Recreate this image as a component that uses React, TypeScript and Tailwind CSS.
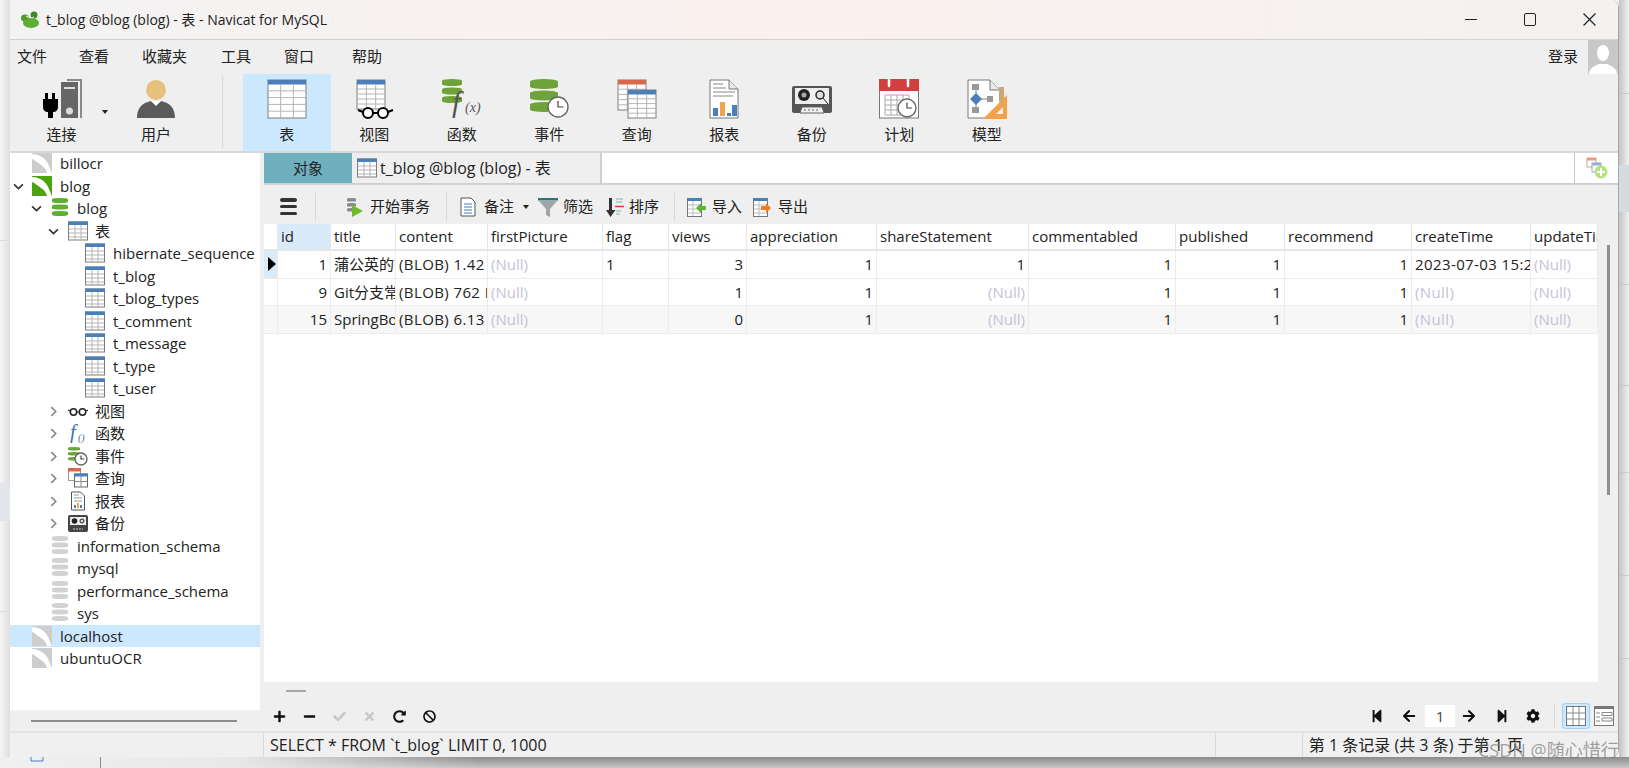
import { ReactNode } from 'react';
import {
  FaBan,
  FaArrowLeft,
  FaArrowRight,
  FaCheck,
  FaCog,
  FaMinus,
  FaPlus,
  FaRedoAlt,
  FaStepBackward,
  FaStepForward,
  FaTimes,
} from 'react-icons/fa';

const FONT = 'font-["Open_Sans","Noto_Sans_CJK_SC",sans-serif]';

const Clock = ({ cx, cy, r }: { cx: number; cy: number; r: number }) => (
  <g>
    <circle cx={cx} cy={cy} r={r} fill="#fff" stroke="#666" strokeWidth="1.4" />
    <path d={`M${cx} ${cy - r * 0.6}V${cy}H${cx + r * 0.55}`} fill="none" stroke="#444" strokeWidth="1.2" />
  </g>
);

const Sheet = ({ x, y, w, h, head = '#4a7fb8' }: { x: number; y: number; w: number; h: number; head?: string }) => {
  const rows = [1, 2, 3, 4].map((i) => y + 4 + ((h - 4) * i) / 5);
  const cols = [1, 2].map((i) => x + (w * i) / 3);
  return (
    <g>
      <rect x={x} y={y} width={w} height={h} fill="#fff" stroke="#7d7d7d" />
      <rect x={x} y={y} width={w} height={4.5} fill={head} />
      {rows.map((r) => (
        <path key={r} d={`M${x} ${r}H${x + w}`} stroke="#b5b5b5" />
      ))}
      {cols.map((c) => (
        <path key={c} d={`M${c} ${y + 4}V${y + h}`} stroke="#b5b5b5" />
      ))}
    </g>
  );
};

// stacked disks of a database drum
const Cylinder = ({ x, y, w, n, h, fill }: { x: number; y: number; w: number; n: number; h: number; fill: string }) => {
  const c = h / 4;
  return (
    <g>
      {Array.from({ length: n }).map((_, i) => {
        const t = y + i * (h + 1.5);
        return (
          <path
            key={i}
            d={`M${x} ${t + c}A${w / 2} ${c} 0 0 1 ${x + w} ${t + c}V${t + h - c}A${w / 2} ${c} 0 0 1 ${x} ${t + h - c}Z`}
            fill={fill}
          />
        );
      })}
    </g>
  );
};

const Big = ({ children }: { children: ReactNode }) => (
  <svg viewBox="0 0 40 40" className="h-10 w-10">
    {children}
  </svg>
);

const ConnectIcon = () => (
  <Big>
    <path d="M25 0h15v39h-2V2H25z" fill="#8a8a8a" />
    <rect x="19" y="3" width="17" height="36" fill="#666" />
    <rect x="22" y="8" width="11" height="2" fill="#ddd" />
    <circle cx="27.5" cy="32" r="3.5" fill="#ddd" />
    <path d="M3 14h3v6h4v-6h3v6h3v8c0 3-2 5-5 5v6H6v-6c-3 0-5-2-5-5v-8h2z" fill="#000" />
  </Big>
);

const UserIcon = () => (
  <Big>
    <circle cx="20" cy="11" r="10" fill="#e6c17d" />
    <path d="M1 39c0-10 5-15 14-17l5 4 5-4c9 2 14 7 14 17z" fill="#5a5a5a" />
    <path d="M15 22h10l-5 5z" fill="#fff" />
  </Big>
);

const TableIcon = () => (
  <Big>
    <Sheet x={1} y={1} w={38} h={38} />
  </Big>
);

const ViewIcon = () => (
  <Big>
    <Sheet x={3} y={1} w={28} h={29} />
    <circle cx="14" cy="34" r="5" fill="#fff" stroke="#000" strokeWidth="2" />
    <circle cx="29" cy="34" r="5" fill="#fff" stroke="#000" strokeWidth="2" />
    <path d="M4 31l5 2M19 34h5M34 33l5-2" stroke="#000" strokeWidth="2" />
  </Big>
);

const FunctionIcon = () => (
  <Big>
    <Cylinder x={0} y={0} w={20} n={3} h={7} fill="#6ea23a" />
    <text x="10" y="33" fontFamily="Liberation Serif" fontStyle="italic" fontSize="30" fill="#555">f</text>
    <text x="23" y="33" fontFamily="Liberation Serif" fontStyle="italic" fontSize="14" fill="#555">(x)</text>
  </Big>
);

const EventIcon = () => (
  <Big>
    <Cylinder x={1} y={0} w={28} n={3} h={10} fill="#6ea23a" />
    <Clock cx={29} cy={28} r={10} />
  </Big>
);

const QueryIcon = () => (
  <Big>
    <Sheet x={1} y={1} w={28} h={30} head="#d9674a" />
    <Sheet x={11} y={11} w={28} h={28} />
  </Big>
);

const ReportIcon = () => (
  <Big>
    <path d="M6 1h19l9 9v29H6z" fill="#fff" stroke="#777" />
    <path d="M25 1v9h9" fill="#e8e8e8" stroke="#777" />
    <path d="M9 5h10M9 9h13M9 13h22M9 17h20" stroke="#888" />
    <rect x="9" y="29" width="5" height="8" fill="#4a7fb8" />
    <rect x="16" y="23" width="5" height="14" fill="#f2a24a" />
    <rect x="23" y="34" width="4" height="3" fill="#4a7fb8" />
    <rect x="28" y="26" width="5" height="11" fill="#4a7fb8" />
  </Big>
);

const BackupIcon = () => (
  <Big>
    <rect x="0" y="7" width="40" height="27" rx="2" fill="#555" />
    <rect x="3" y="9" width="34" height="16" fill="#eee" />
    <circle cx="12" cy="16" r="6" fill="#222" />
    <circle cx="12" cy="16" r="2.5" fill="#aaa" />
    <circle cx="28" cy="16" r="4" fill="#ddd" stroke="#222" strokeWidth="1.5" />
    <path d="M31 19l5 6" stroke="#222" />
    <path d="M8 34l2-6h20l2 6z" fill="#eee" stroke="#666" />
    <path d="M12 31h16" stroke="#666" strokeDasharray="2 2" />
  </Big>
);

const ScheduleIcon = () => (
  <Big>
    <rect x="0.5" y="1" width="39" height="38" fill="#fff" stroke="#777" />
    <rect x="0" y="0" width="40" height="12" fill="#d23f3f" />
    <path d="M10 0v7M29 0v7" stroke="#fff" strokeWidth="2.5" strokeLinecap="round" />
    <path d="M6 16h24M6 21h20M6 26h18M6 31h16M6 36h16M6 16v20M12 16v20M18 16v20M24 16v14M30 16v6" stroke="#aaa" fill="none" />
    <Clock cx={28} cy={29} r={9} />
  </Big>
);

const ModelIcon = () => (
  <Big>
    <path d="M1 1h22l10 10v28H1z" fill="#fff" stroke="#777" />
    <path d="M23 1v10h10" fill="#e8e8e8" stroke="#777" />
    <path d="M9 9v22M9 20h14" stroke="#888" />
    <rect x="5" y="5" width="7" height="6" fill="#999" />
    <rect x="5" y="28" width="7" height="6" fill="#999" />
    <rect x="20" y="17" width="6" height="6" fill="#999" />
    <path d="M9 14l6 6-6 6-6-6z" fill="#4a7fb8" />
    <rect x="32" y="8" width="5" height="14" fill="#c8a878" />
    <path d="M40 16v24H16z" fill="#f2a24a" />
    <path d="M36 28v7h-7z" fill="#efefef" />
  </Big>
);

const LogoIcon = () => (
  <svg viewBox="0 0 20 18" className="h-[18px] w-5">
    <ellipse cx="5" cy="7" rx="4" ry="3.5" fill="#4f9a2c" />
    <ellipse cx="14" cy="4" rx="3.5" ry="3.5" fill="#3f8a22" />
    <ellipse cx="11" cy="12" rx="8" ry="5" fill="#5fae34" />
    <path d="M6 5c3 2 6 2 8 1" stroke="#fff" fill="none" />
  </svg>
);

const MysqlIcon = ({ on }: { on?: boolean }) => (
  <svg viewBox="0 0 20 20" className="h-5 w-5">
    <rect width="20" height="20" fill={on ? '#4aa50c' : '#cdcdcd'} />
    <path d="M0 1c6 0 12 3 15 8 2 3 3 7 5 11h-5c-1-4-3-6-6-8C6 10 3 7 0 6z" fill="#fff" />
  </svg>
);

const DbIcon = ({ on }: { on?: boolean }) => (
  <svg viewBox="0 0 16 18" className="h-[18px] w-4">
    <Cylinder x={0} y={0} w={16} n={3} h={5} fill={on ? '#5fae34' : '#d2d2d2'} />
  </svg>
);

const SmallTable = () => (
  <svg viewBox="0 0 20 20" className="h-5 w-5">
    <rect x="0.5" y="1" width="19" height="18" fill="#fff" stroke="#7d7d7d" />
    <rect x="0" y="0.5" width="20" height="3.5" fill="#4a7fb8" />
    <path d="M1 8h18M1 12h18M1 16h18M7 4v15M13 4v15" stroke="#b5b5b5" />
  </svg>
);

const GlassesSmall = () => (
  <svg viewBox="0 0 20 20" className="h-5 w-5">
    <circle cx="5.5" cy="11" r="3.2" fill="none" stroke="#222" strokeWidth="1.5" />
    <circle cx="14.5" cy="11" r="3.2" fill="none" stroke="#222" strokeWidth="1.5" />
    <path d="M0 9l2 1M8.7 11h2.6M18 10l2-1" stroke="#222" strokeWidth="1.2" />
  </svg>
);

const FuncSmall = () => (
  <svg viewBox="0 0 20 20" className="h-5 w-5">
    <text x="2" y="16" fontFamily="Liberation Serif" fontStyle="italic" fontSize="20" fill="#3d6fa8">f</text>
    <text x="10" y="18" fontFamily="Liberation Serif" fontStyle="italic" fontSize="10" fill="#3d6fa8">()</text>
  </svg>
);

const EventSmall = () => (
  <svg viewBox="0 0 20 20" className="h-5 w-5">
    <Cylinder x={0} y={1} w={12} n={3} h={3.5} fill="#6ea23a" />
    <Clock cx={13} cy={13} r={6} />
  </svg>
);

const QuerySmall = () => (
  <svg viewBox="0 0 20 20" className="h-5 w-5">
    <rect x="0.5" y="0.5" width="12" height="12" fill="#fff" stroke="#999" />
    <rect x="0" y="0" width="13" height="3.5" fill="#d9674a" />
    <rect x="6.5" y="6" width="13" height="13" fill="#fff" stroke="#666" />
    <rect x="6" y="5.5" width="14" height="3" fill="#4a7fb8" />
    <path d="M13 8v11M7 13.5h12" stroke="#888" />
  </svg>
);

const ReportSmall = () => (
  <svg viewBox="0 0 20 20" className="h-5 w-5">
    <path d="M3.5 1h9l4 4v14h-13z" fill="#fff" stroke="#555" />
    <path d="M6 4h5M6 7h8M6 10h8" stroke="#999" />
    <rect x="6" y="14" width="2" height="3" fill="#4a7fb8" />
    <rect x="9" y="12" width="2" height="5" fill="#f2a24a" />
    <rect x="12" y="14" width="2" height="3" fill="#4a7fb8" />
  </svg>
);

const BackupSmall = () => (
  <svg viewBox="0 0 20 20" className="h-5 w-5">
    <rect x="0" y="2" width="20" height="17" rx="2" fill="#444" />
    <rect x="2" y="4" width="16" height="8" fill="#eee" />
    <circle cx="6.5" cy="8" r="2.8" fill="#222" />
    <circle cx="14" cy="8" r="2" fill="#ddd" stroke="#222" />
    <path d="M5 16h10" stroke="#ccc" strokeDasharray="2 1" />
  </svg>
);

const Chevron = ({ open }: { open?: boolean }) => (
  <svg viewBox="0 0 10 10" className="h-[11px] w-[11px]">
    <path
      d={open ? 'M1 3l4 4 4-4' : 'M3 1l4 4-4 4'}
      fill="none"
      stroke={open ? '#333' : '#888'}
      strokeWidth="1.5"
    />
  </svg>
);

type TreeItem = {
  label: string;
  text: number;
  icon: ReactNode;
  iconAt: number;
  chevron?: number;
  open?: boolean;
  selected?: boolean;
};

const tableRow = (label: string): TreeItem => ({ label, text: 103, icon: <SmallTable />, iconAt: 75 });
const folder = (label: string, icon: ReactNode): TreeItem => ({ label, text: 85, icon, iconAt: 58, chevron: 38 });
const greyDb = (label: string): TreeItem => ({ label, text: 67, icon: <DbIcon />, iconAt: 42 });

const tree: TreeItem[] = [
  { label: 'billocr', text: 50, icon: <MysqlIcon />, iconAt: 22 },
  { label: 'blog', text: 50, icon: <MysqlIcon on />, iconAt: 22, chevron: 3, open: true },
  { label: 'blog', text: 67, icon: <DbIcon on />, iconAt: 42, chevron: 21, open: true },
  { label: '表', text: 85, icon: <SmallTable />, iconAt: 58, chevron: 38, open: true },
  tableRow('hibernate_sequence'),
  tableRow('t_blog'),
  tableRow('t_blog_types'),
  tableRow('t_comment'),
  tableRow('t_message'),
  tableRow('t_type'),
  tableRow('t_user'),
  folder('视图', <GlassesSmall />),
  folder('函数', <FuncSmall />),
  folder('事件', <EventSmall />),
  folder('查询', <QuerySmall />),
  folder('报表', <ReportSmall />),
  folder('备份', <BackupSmall />),
  greyDb('information_schema'),
  greyDb('mysql'),
  greyDb('performance_schema'),
  greyDb('sys'),
  { label: 'localhost', text: 50, icon: <MysqlIcon />, iconAt: 22, selected: true },
  { label: 'ubuntuOCR', text: 50, icon: <MysqlIcon />, iconAt: 22 },
];

const Sidebar = () => (
  <div className="flex w-[250px] shrink-0 flex-col">
    <div className="h-[557px] overflow-hidden bg-white">
      <div className="-mt-px">
        {tree.map((item, i) => (
          <div
            key={i}
            className={`relative h-[22.5px] overflow-hidden whitespace-nowrap text-[15px] leading-[22px] text-[#222] ${
              item.selected ? 'bg-[#cce8ff]' : ''
            }`}
          >
            {item.chevron !== undefined && (
              <span className="absolute top-[6px]" style={{ left: item.chevron }}>
                <Chevron open={item.open} />
              </span>
            )}
            <span className="absolute top-[1px]" style={{ left: item.iconAt }}>
              {item.icon}
            </span>
            <span className="absolute top-0" style={{ left: item.text }}>
              {item.label}
            </span>
          </div>
        ))}
      </div>
    </div>
    <div className="flex h-[21px] items-center pl-[21px]">
      <div className="h-[2px] w-[206px] bg-[#8c8c8c]" />
    </div>
  </div>
);

const tools = [
  { label: '表', icon: <TableIcon />, active: true },
  { label: '视图', icon: <ViewIcon /> },
  { label: '函数', icon: <FunctionIcon /> },
  { label: '事件', icon: <EventIcon /> },
  { label: '查询', icon: <QueryIcon /> },
  { label: '报表', icon: <ReportIcon /> },
  { label: '备份', icon: <BackupIcon /> },
  { label: '计划', icon: <ScheduleIcon /> },
  { label: '模型', icon: <ModelIcon /> },
];

const ToolButton = ({ label, icon, active, className = 'w-[87.5px]' }: { label: string; icon: ReactNode; active?: boolean; className?: string }) => (
  <div className={`flex h-[77px] flex-col items-center pt-[5px] ${className} ${active ? 'bg-[#cce8ff]' : ''}`}>
    {icon}
    <span className="mt-[5px] text-[15px] leading-5 text-[#222]">{label}</span>
  </div>
);

const menus = [
  { label: '文件', className: 'ml-[7px] w-[62px]' },
  { label: '查看', className: 'w-[63px]' },
  { label: '收藏夹', className: 'w-[79px]' },
  { label: '工具', className: 'w-[63px]' },
  { label: '窗口', className: 'w-[68px]' },
  { label: '帮助', className: '' },
];

const columns = [
  'id',
  'title',
  'content',
  'firstPicture',
  'flag',
  'views',
  'appreciation',
  'shareStatement',
  'commentabled',
  'published',
  'recommend',
  'createTime',
  'updateTime',
];

const NULL = '(Null)';

const rows = [
  ['1', '蒲公英的故事', '(BLOB) 1.42 KB', NULL, '1', '3', '1', '1', '1', '1', '1', '2023-07-03 15:26:41', NULL],
  ['9', 'Git分支常用', '(BLOB) 762 Bytes', NULL, '', '1', '1', NULL, '1', '1', '1', NULL, NULL],
  ['15', 'SpringBoot', '(BLOB) 6.13 KB', NULL, '', '0', '1', NULL, '1', '1', '1', NULL, NULL],
];

const rightAligned = [0, 5, 6, 7, 8, 9, 10];

const GRID = 'grid grid-cols-[14px_53px_65px_92px_115px_66px_78px_130px_152px_147px_109px_127px_119px_67px]';

const Grid = () => (
  <div className="h-[458px] w-[1334px] bg-white text-[15px] text-[#222]">
    <div className={`${GRID} h-[27px] border-b-2 border-[#e6e6e6] leading-[25px]`}>
      <div className="border-r border-[#e6e6e6]" />
      {columns.map((c, i) => (
        <div
          key={c}
          className={`overflow-hidden whitespace-nowrap border-r border-[#e6e6e6] pl-[3px] ${i === 0 ? 'bg-[#d9ebf9]' : ''}`}
        >
          {c}
        </div>
      ))}
    </div>
    {rows.map((row, r) => (
      <div
        key={r}
        className={`${GRID} h-[27.5px] border-b border-[#ececec] leading-[27px] ${r === 2 ? 'bg-[#f7f7f7]' : ''}`}
      >
        <div className={`flex items-center border-r border-[#ececec] pl-1 ${r === 0 ? 'bg-[#d9ebf9]' : ''}`}>
          {r === 0 && <div className="h-0 w-0 border-y-[7px] border-l-[8px] border-y-transparent border-l-black" />}
        </div>
        {row.map((v, i) => (
          <div
            key={i}
            className={`overflow-hidden whitespace-nowrap border-r border-[#ececec] px-[3px] ${
              v === NULL ? 'text-[#c3c3d6]' : ''
            } ${rightAligned.includes(i) ? 'text-right' : ''} ${i === 2 || i === 11 ? 'tracking-[0.4px]' : ''}`}
          >
            {v}
          </div>
        ))}
      </div>
    ))}
  </div>
);

const Small = ({ w = 19, children }: { w?: number; children: ReactNode }) => (
  <svg viewBox={`0 0 ${w} 20`} width={w} height={20} className="block shrink-0">
    {children}
  </svg>
);

const ImportExport = ({ color, d }: { color: string; d: string }) => (
  <Small>
    <rect x="0.5" y="1.5" width="14" height="18" fill="#fff" stroke="#777" />
    <rect x="0" y="1" width="15" height="3" fill="#4a7fb8" />
    <path d="M1 8h13M1 12h13M1 16h13M6 4v15" stroke="#bbb" />
    <path d={d} fill={color} />
  </Small>
);

const Sep = ({ className }: { className: string }) => <div className={`h-7 w-px bg-[#d8d8d8] ${className}`} />;

const SubToolbar = () => (
  <div className="flex h-[39px] shrink-0 items-center pt-[4px] text-[15px] text-[#222]">
    <div className="ml-[16px] flex h-[17px] w-[17px] flex-col justify-between">
      <div className="h-[3.5px] rounded-sm bg-[#333]" />
      <div className="h-[3.5px] rounded-sm bg-[#333]" />
      <div className="h-[3.5px] rounded-sm bg-[#333]" />
    </div>
    <Sep className="ml-[18px]" />
    <span className="ml-[30px]">
      <Small w={18}>
        <Cylinder x={1} y={1} w={9} n={3} h={3.5} fill="#8a8a8a" />
        <path d="M6 8l11 6-11 6z" fill="#6dbb2c" />
      </Small>
    </span>
    <span className="ml-[6px]">开始事务</span>
    <Sep className="ml-[16px]" />
    <span className="ml-[13px]">
      <Small w={16}>
        <path d="M1 1h10l4 4v14H1z" fill="#fff" stroke="#555" />
        <path d="M4 7h8M4 10h8M4 13h8M4 16h8" stroke="#3d7fc0" />
      </Small>
    </span>
    <span className="ml-[8px]">备注</span>
    <div className="ml-[9px] h-0 w-0 border-x-[3.5px] border-t-[4px] border-x-transparent border-t-[#222]" />
    <span className="ml-[9px]">
      <Small w={20}>
        <path d="M0 1h20v2.5H0z" fill="#2f6f7f" />
        <path d="M1 4h18l-7 8v8l-4-2v-6z" fill="#9fa5a8" />
      </Small>
    </span>
    <span className="ml-[5px]">筛选</span>
    <span className="ml-[12px]">
      <Small>
        <path d="M4 1h3v12h3.5L5.5 20 1 13h3z" fill="#333" />
        <path d="M11 2h7M11 5h6M11 14h5M11 17h4" stroke="#7fb8a0" />
        <path d="M10 9.5h9" stroke="#e2334a" strokeWidth="1.5" />
      </Small>
    </span>
    <span className="ml-[5px]">排序</span>
    <Sep className="ml-[15px]" />
    <span className="ml-[12px]">
      <ImportExport color="#5cb82e" d="M9 11l5-5v3h5v4h-5v3z" />
    </span>
    <span className="ml-[6px]">导入</span>
    <span className="ml-[11px]">
      <ImportExport color="#f57c1f" d="M8 9h5V6l5 5-5 5v-3H8z" />
    </span>
    <span className="ml-[6px]">导出</span>
  </div>
);

const BottomBar = () => (
  <div className="h-[48px] shrink-0 pt-[8px]">
    <div className="ml-[22px] h-[2px] w-5 bg-[#a8a8a8]" />
    <div className="mt-[11px] flex h-[26px] items-center justify-between pr-[4px]">
      <div className="ml-[9px] flex items-center gap-[17px] text-[13px] text-[#111]">
        <FaPlus />
        <FaMinus />
        <FaCheck className="text-[#c8c8c8]" />
        <FaTimes className="text-[#c8c8c8]" />
        <FaRedoAlt />
        <FaBan />
      </div>
      <div className="flex items-center text-[14px] text-[#111]">
        <FaStepBackward />
        <FaArrowLeft className="ml-[18px]" />
        <span className="ml-[9px] flex h-[22px] w-[30px] items-center justify-center bg-white text-[15px] text-[#444]">1</span>
        <FaArrowRight className="ml-[7px]" />
        <FaStepForward className="ml-[19px]" />
        <FaCog className="ml-[17px]" />
        <div className="ml-[14px] h-6 w-px bg-[#d8d8d8]" />
        <div className="ml-[7px] flex h-[26px] w-[28px] items-center justify-center rounded-[3px] border border-[#9fd0f5] bg-[#cce8ff]">
          <svg viewBox="0 0 20 20" className="h-5 w-5">
            <rect x="0.5" y="0.5" width="19" height="19" fill="#fff" stroke="#777" />
            <path d="M7 1v18M13 1v18M1 7h18M1 13h18" stroke="#888" />
          </svg>
        </div>
        <svg viewBox="0 0 20 20" className="ml-1 h-5 w-5">
          <rect x="0.5" y="0.5" width="19" height="19" fill="#fff" stroke="#777" />
          <rect x="0" y="0" width="20" height="3" fill="#777" />
          <path d="M2 7h4M2 11h4M2 15h4M8 6.5h10v3H8zM8 12h10v3H8z" fill="none" stroke="#888" />
        </svg>
      </div>
    </div>
  </div>
);

export default function App() {
  return (
    <div className={`relative flex h-[768px] w-[1629px] flex-col overflow-hidden bg-[#f3f3f3] ${FONT}`}>
      <div className="flex h-[757px] shrink-0">
        <div className="flex w-[10px] shrink-0 flex-col bg-[#ececec] bg-linear-to-r from-[#f6f6f6] to-[#dedede]">
          <div className="mt-[240px] h-px bg-[#dcdcdc]" />
          <div className="mt-[242px] h-[38px] bg-[#e2e5ea]" />
          <div className="mt-[90px] h-px bg-[#dcdcdc]" />
        </div>
        <div className="flex h-[757px] w-[1609px] shrink-0 flex-col overflow-hidden rounded-lg border-r border-[#a8a8a8] bg-[#efefef]">
          <div className="flex h-10 shrink-0 items-center border-b border-[#d2d2d2] bg-[#f5f2f1] bg-linear-to-r from-[#f3f3f3] via-[#fbf1ee] to-[#f3f2f1]">
            <span className="ml-[10px]">
              <LogoIcon />
            </span>
            <span className="ml-[6px] text-[14px] text-[#222]">t_blog @blog (blog) - 表 - Navicat for MySQL</span>
            <div className="ml-auto flex items-center">
              <div className="h-[1.5px] w-[12px] bg-[#222]" />
              <div className="ml-[47px] h-[13px] w-[12px] rounded-[2px] border-[1.5px] border-[#222]" />
              <svg viewBox="0 0 12 12" className="ml-[47px] mr-[22px] h-[13px] w-[13px]">
                <path d="M0.5 0.5l11 11M11.5 0.5l-11 11" stroke="#222" strokeWidth="1.1" />
              </svg>
            </div>
          </div>
          <div className="flex h-[32px] shrink-0 items-center text-[15px] text-[#222]">
            {menus.map((m) => (
              <span key={m.label} className={m.className}>
                {m.label}
              </span>
            ))}
            <span className="ml-auto mr-[10px]">登录</span>
            <div className="flex h-[34px] w-[30px] items-end justify-center self-start overflow-hidden bg-[#c8c8c8]">
              <svg viewBox="0 0 30 34" className="h-[34px] w-[30px]">
                <ellipse cx="15" cy="13" rx="6" ry="8" fill="#fff" />
                <path d="M1 34c0-6 6-8 10-10h8c4 2 10 4 10 10z" fill="#fff" />
              </svg>
            </div>
          </div>
          <div className="flex h-[81px] shrink-0 items-start border-b-2 border-[#d8d8d8] pt-[2px]">
            <ToolButton label="连接" icon={<ConnectIcon />} className="ml-[8px] w-[87px]" />
            <div className="ml-[-3px] mt-[36px] h-0 w-0 border-x-[3.5px] border-t-[4px] border-x-transparent border-t-[#222]" />
            <ToolButton label="用户" icon={<UserIcon />} className="ml-[8px] w-[80px]" />
            <div className="ml-[26px] mt-[2px] h-[72px] w-px bg-[#d8d8d8]" />
            <div className="ml-[20px] flex">
              {tools.map((t) => (
                <ToolButton key={t.label} {...t} />
              ))}
            </div>
          </div>
          <div className="flex min-h-0 flex-1">
            <Sidebar />
            <div className="ml-1 flex min-w-0 flex-1 flex-col">
              <div className="flex h-[32px] shrink-0 border-b-2 border-[#cfcfcf] text-[15px] text-[#222]">
                <div className="flex w-[88px] items-center justify-center bg-[#6fb0bf]">对象</div>
                <div className="flex w-[250px] items-center border-r-2 border-[#cfcfcf] pl-[5px]">
                  <SmallTable />
                  <span className="ml-[3px] text-[16px]">t_blog @blog (blog) - 表</span>
                </div>
                <div className="flex-1 bg-white" />
                <div className="flex w-[44px] items-center justify-center border-l border-[#c8c8c8] bg-white">
                  <svg viewBox="0 0 22 22" className="h-[22px] w-[22px]">
                    <rect x="1" y="1" width="9" height="9" fill="#fff" stroke="#e0a090" />
                    <rect x="1" y="1" width="9" height="2.5" fill="#e89a85" />
                    <rect x="6" y="6" width="9" height="9" fill="#fff" stroke="#90a8d0" />
                    <rect x="6" y="6" width="9" height="2.5" fill="#90b0d8" />
                    <circle cx="15" cy="15" r="6.5" fill="#b5e37a" />
                    <path d="M15 11v8M11 15h8" stroke="#fff" strokeWidth="2" />
                  </svg>
                </div>
              </div>
              <SubToolbar />
              <div className="relative flex-1">
                <Grid />
                <div className="absolute left-[1343px] top-[21px] h-[250px] w-[3px] bg-[#909090]" />
                <BottomBar />
              </div>
            </div>
          </div>
          <div className="flex h-[26px] shrink-0 items-center border-t-2 border-[#e2e2e2] bg-[#f0f0f0] text-[16px] text-[#222]">
            <div className="flex h-full w-[254px] border-r border-[#d8d8d8]" />
            <span className="ml-[6px]">SELECT * FROM `t_blog` LIMIT 0, 1000</span>
            <div className="ml-auto h-full w-[88px] border-x border-[#d8d8d8]" />
            <span className="ml-[6px] mr-[95px]">第 1 条记录 (共 3 条) 于第 1 页</span>
          </div>
        </div>
        <div className="flex w-[10px] shrink-0 flex-col bg-[#dcdcdc] bg-linear-to-r from-[#c4c4c4] to-[#f0f0f0]">
          <div className="mt-[93px] h-px bg-[#c8c8c8]" />
          <div className="mt-[71px] h-[47px] bg-[#d6dbe0]" />
          <div className="mt-[72px] h-px bg-[#c8c8c8]" />
          <div className="mt-[100px] h-px bg-[#c8c8c8]" />
          <div className="mt-[86px] h-px bg-[#c8c8c8]" />
          <div className="mt-[102px] h-px bg-[#c8c8c8]" />
          <div className="mt-[82px] h-px bg-[#c8c8c8]" />
        </div>
      </div>
      <div className="relative h-[11px] shrink-0 bg-[#a8a8a8] bg-linear-to-b from-[#8c8c8c] to-[#c6c6c6]">
        <div className="h-full w-[480px] bg-linear-to-r from-[#f0f0f0] via-[#e8e8e8] to-transparent" />
        <div className="absolute left-[100px] top-0 h-full w-px bg-[#8a8a8a]" />
        <svg viewBox="0 0 14 6" className="absolute left-[30px] top-0 h-[6px] w-[14px]">
          <path d="M1 0v4h12V0" fill="none" stroke="#3f7fc9" />
        </svg>
      </div>
      <span className="absolute left-[1478px] top-[737px] text-[18px] text-[#7a7a7a]/70">CSDN @随心惜行</span>
    </div>
  );
}
